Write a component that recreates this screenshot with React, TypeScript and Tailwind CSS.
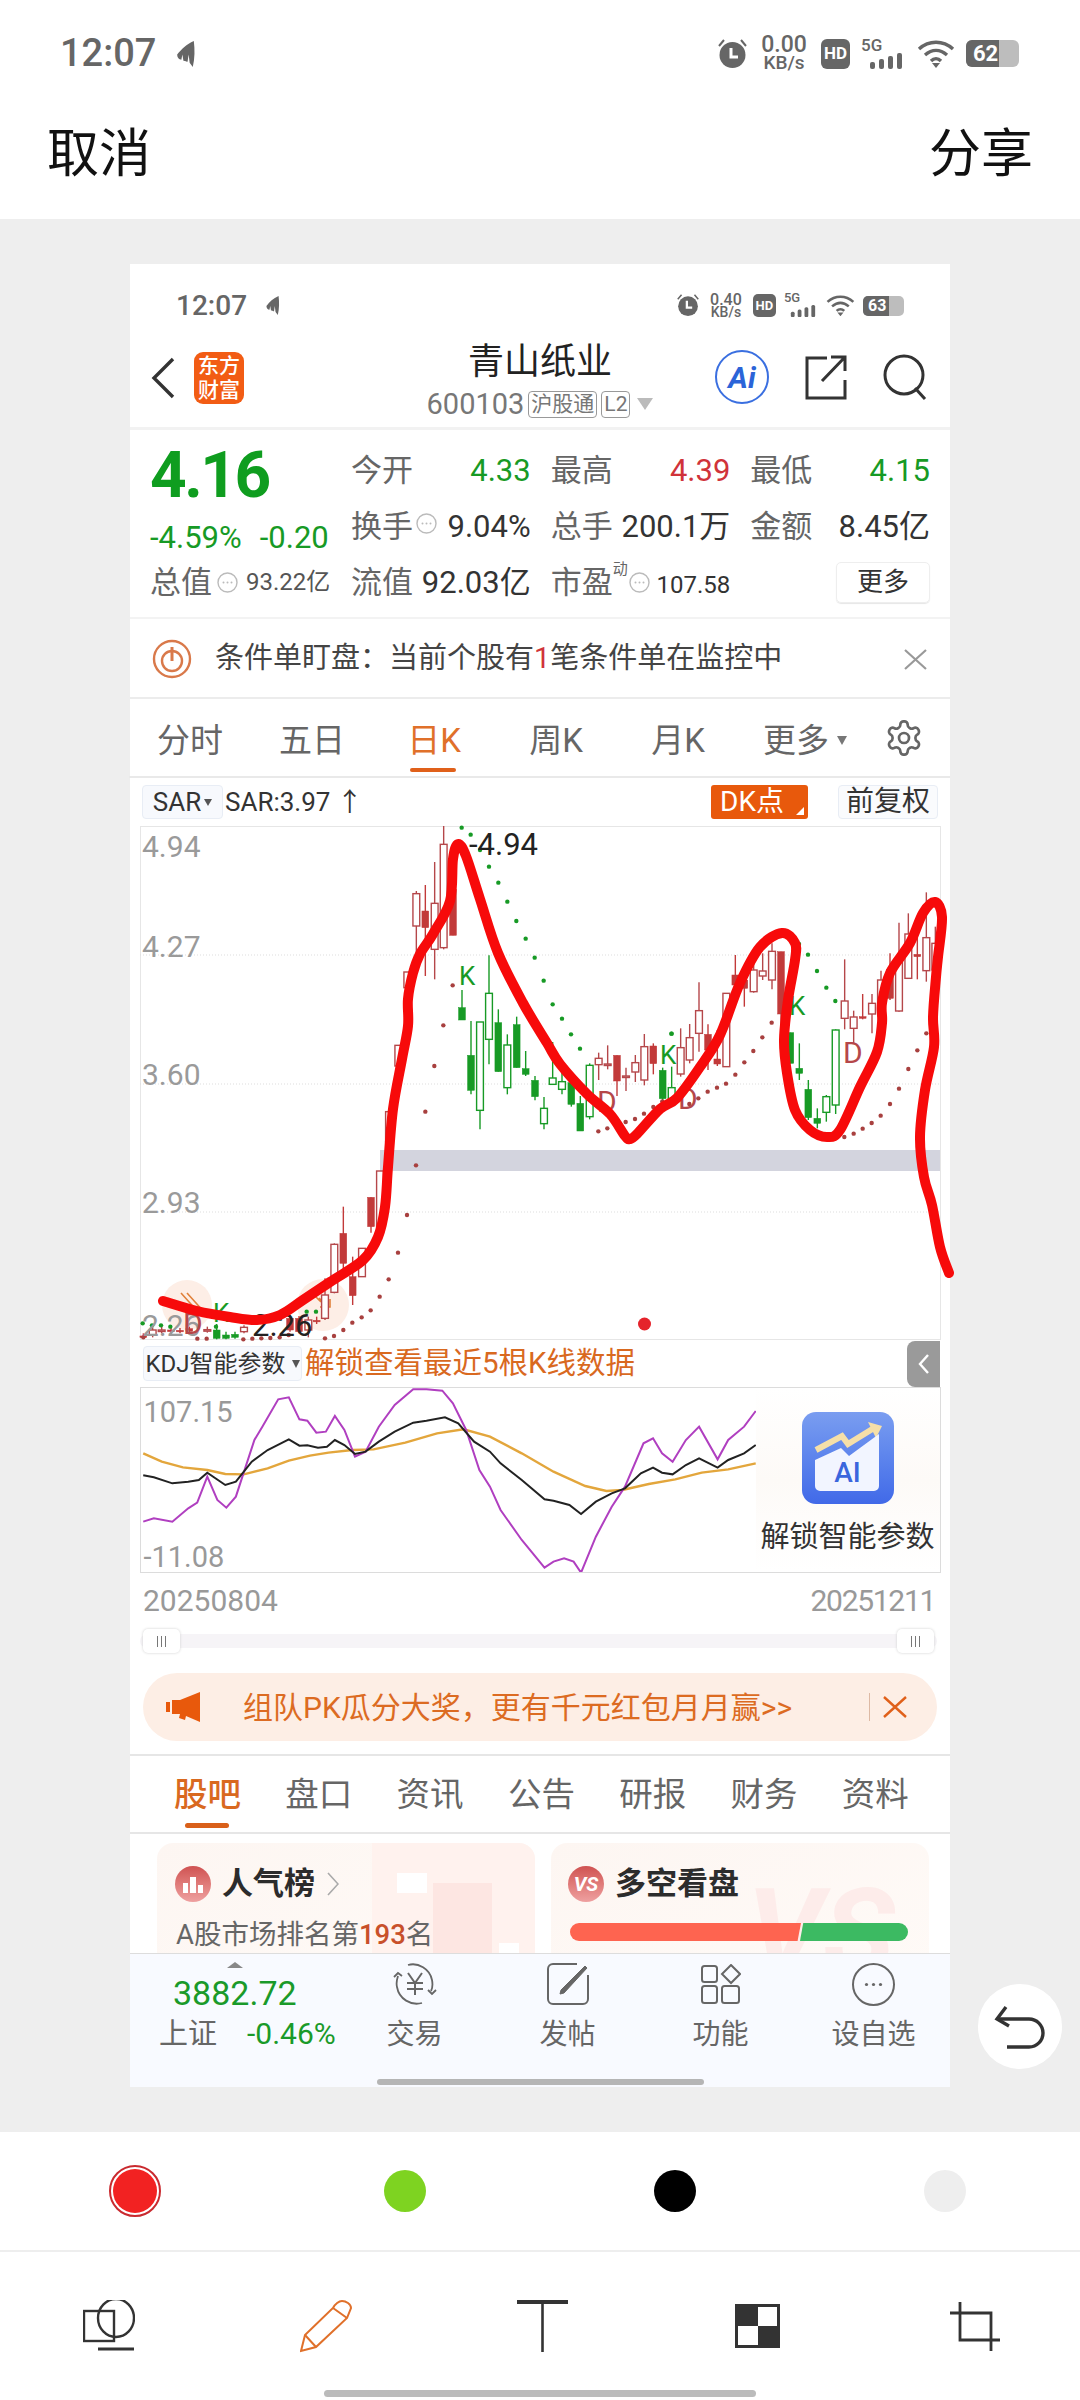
import { ReactNode } from 'react';

type Kind = 'R' | 'r' | 'G' | 'g';
type Candle = [number, number, number, number, number, Kind];

const RED = '#b5474a';
const RED_FILL = '#c23a3a';
const GREEN = '#179a25';

// candles read off the picture, x/y in page pixels after conversion
const fromA = (x: number, y: number) => [380 + x / 3, 826 + y / 3];
const fromB = (x: number, y: number) => [660 + x / 3, 860 + y / 3];
const fromC = (x: number, y: number) => [130 + x / 3, 1100 + y / 3];

const candlesC: Candle[] = [
  [40, 700, 708, 712, 716, 'r'], [68, 682, 690, 705, 712, 'R'], [95, 680, 690, 692, 700, 'R'], [123, 682, 690, 695, 702, 'r'],
  [150, 684, 691, 694, 700, 'r'], [178, 680, 686, 694, 700, 'r'], [232, 680, 689, 691, 698, 'R'], [260, 672, 690, 715, 718, 'g'],
  [288, 695, 705, 715, 718, 'g'], [315, 695, 703, 712, 716, 'g'], [342, 676, 682, 695, 700, 'R'], [480, 645, 655, 690, 695, 'r'],
  [507, 648, 655, 695, 700, 'r'], [535, 650, 660, 690, 712, 'R'], [560, 650, 661, 664, 672, 'r'], [585, 535, 585, 655, 660, 'R'],
  [613, 430, 433, 577, 580, 'R'], [640, 320, 400, 490, 520, 'r'], [668, 470, 530, 587, 615, 'r'], [696, 445, 445, 530, 530, 'R'],
  [723, 292, 292, 380, 398, 'r'], [750, 213, 213, 380, 380, 'R'], [777, 35, 35, 125, 125, 'R'],
];
const candlesA: Candle[] = [
  [55, 658, 658, 720, 730, 'R'], [82, 438, 438, 485, 485, 'R'], [109, 195, 203, 300, 430, 'R'], [136, 177, 255, 305, 450, 'r'],
  [164, 108, 232, 370, 460, 'R'], [191, 0, 55, 365, 370, 'R'], [219, 190, 190, 328, 328, 'r'], [246, 492, 545, 582, 582, 'g'],
  [273, 585, 688, 793, 805, 'g'], [300, 588, 588, 853, 910, 'G'], [327, 388, 502, 640, 715, 'G'], [355, 550, 590, 737, 737, 'g'],
  [382, 625, 657, 785, 805, 'G'], [410, 572, 596, 725, 725, 'g'], [437, 675, 728, 745, 750, 'g'], [465, 750, 763, 812, 823, 'g'],
  [492, 813, 847, 893, 910, 'G'], [518, 648, 756, 775, 775, 'G'], [546, 740, 767, 790, 805, 'G'], [574, 750, 770, 835, 842, 'g'],
  [601, 810, 832, 915, 915, 'g'], [629, 712, 718, 872, 880, 'G'], [656, 680, 697, 716, 762, 'R'], [683, 658, 714, 718, 730, 'R'],
  [711, 688, 688, 765, 810, 'r'], [738, 725, 750, 753, 795, 'R'], [766, 687, 710, 738, 768, 'R'], [793, 624, 662, 762, 778, 'R'],
  [820, 652, 660, 713, 745, 'r'], [848, 725, 733, 818, 830, 'g'],
];
const candlesB: Candle[] = [
  [35, 620, 683, 730, 735, 'G'], [62, 505, 563, 642, 650, 'R'], [89, 492, 533, 600, 610, 'R'], [117, 367, 452, 520, 575, 'R'],
  [144, 493, 523, 570, 630, 'r'], [172, 510, 597, 612, 618, 'r'], [199, 400, 400, 620, 620, 'R'], [226, 285, 345, 375, 375, 'r'],
  [253, 340, 360, 385, 440, 'r'], [281, 310, 330, 395, 398, 'R'], [308, 280, 333, 348, 360, 'R'], [336, 250, 274, 360, 388, 'R'],
  [363, 275, 275, 462, 505, 'r'], [391, 518, 518, 610, 610, 'g'], [418, 550, 625, 640, 660, 'g'], [445, 660, 688, 773, 780, 'g'],
  [472, 745, 775, 790, 805, 'g'], [499, 705, 710, 757, 785, 'G'], [527, 508, 510, 735, 762, 'G'], [554, 298, 423, 475, 508, 'R'],
  [581, 452, 471, 505, 550, 'R'], [608, 402, 470, 475, 478, 'r'], [636, 402, 430, 462, 520, 'R'], [663, 332, 360, 430, 470, 'R'],
  [690, 280, 328, 415, 420, 'r'], [717, 188, 300, 453, 455, 'R'], [745, 160, 222, 355, 355, 'R'], [772, 225, 283, 290, 358, 'r'],
  [799, 97, 233, 332, 365, 'R'], [826, 200, 250, 330, 360, 'R'],
];

const redDots = [
  ...[[40, 712], [202, 716], [230, 716], [340, 718], [367, 716], [394, 715], [421, 714], [449, 712], [476, 705], [585, 715], [612, 708], [640, 690], [667, 668], [695, 652], [722, 631], [749, 590], [776, 538], [804, 458], [831, 345]].map(([x, y]) => fromC(x, y)),
  ...[[108, 1018], [136, 857], [163, 720], [190, 598], [218, 478], [655, 916], [682, 907], [737, 888], [765, 879], [792, 863], [820, 843], [847, 826]].map(([x, y]) => fromA(x, y)),
  ...[[88, 732], [115, 715], [143, 695], [171, 683], [198, 671], [226, 644], [253, 607], [280, 573], [307, 532], [335, 488], [553, 831], [581, 821], [608, 806], [635, 789], [662, 767], [690, 732], [717, 686], [745, 627], [772, 571], [799, 520], [826, 462]].map(([x, y]) => fromB(x, y)),
];
const greenDots = [
  ...[[38, 670], [66, 676], [93, 676], [121, 680], [258, 680], [530, 635], [558, 635]].map(([x, y]) => fromC(x, y)),
  ...[[245, 5], [272, 26], [300, 72], [327, 122], [355, 170], [382, 227], [409, 285], [437, 338], [464, 395], [491, 464], [518, 535], [546, 578], [573, 625], [600, 668], [875, 623]].map(([x, y]) => fromA(x, y)),
  ...[[34, 521], [417, 252], [444, 284], [471, 333], [499, 383], [526, 423]].map(([x, y]) => fromB(x, y)),
];

// hand drawn red marker line
const marker = [
  [163, 1301], [197, 1311], [230, 1317], [257, 1320], [280, 1315], [303, 1300], [330, 1282], [363, 1260], [378, 1237], [385, 1207], [388, 1167],
  [393, 1109], [402, 1059], [408, 1026], [408, 999], [413, 973], [420, 954], [433, 934], [450, 901], [453, 859], [458, 844], [466, 856], [480, 899],
  [498, 953], [523, 1003], [547, 1043], [560, 1064], [587, 1094], [610, 1114], [625, 1136], [630, 1139], [637, 1134], [660, 1109], [677, 1098],
  [700, 1067], [720, 1035], [740, 983], [760, 947], [782, 933], [795, 943], [795, 960], [788, 1000], [784, 1040], [787, 1073], [795, 1110], [810, 1130],
  [827, 1137], [840, 1130], [860, 1087], [877, 1052], [882, 1023], [882, 1003], [890, 973], [910, 943], [923, 913], [935, 902], [942, 917], [938, 957],
  [936, 977], [933, 1017], [934, 1047], [925, 1090], [920, 1137], [924, 1177], [932, 1205], [940, 1247], [949, 1273],
];

function smooth(pts: number[][]) {
  let d = `M${pts[0][0]} ${pts[0][1]}`;
  for (let i = 0; i < pts.length - 1; i++) {
    const p0 = pts[Math.max(i - 1, 0)];
    const p1 = pts[i];
    const p2 = pts[i + 1];
    const p3 = pts[Math.min(i + 2, pts.length - 1)];
    const c1x = p1[0] + (p2[0] - p0[0]) / 6;
    const c1y = p1[1] + (p2[1] - p0[1]) / 6;
    const c2x = p2[0] - (p3[0] - p1[0]) / 6;
    const c2y = p2[1] - (p3[1] - p1[1]) / 6;
    d += ` C${c1x} ${c1y} ${c2x} ${c2y} ${p2[0]} ${p2[1]}`;
  }
  return d;
}

const purple = [[25, 575], [45, 565], [80, 575], [110, 535], [127, 518], [146, 440], [165, 510], [182, 533], [200, 500], [235, 330], [250, 290], [280, 208], [300, 202], [320, 268], [335, 272], [352, 308], [370, 305], [387, 258], [405, 300], [425, 380], [445, 365], [470, 290], [500, 225], [535, 178], [560, 178], [590, 182], [610, 220], [635, 300], [660, 420], [680, 470], [700, 540], [740, 630], [783, 713], [800, 695], [820, 685], [838, 695], [852, 728], [880, 620], [910, 530], [935, 470], [970, 340], [988, 325], [1005, 370], [1025, 395], [1050, 330], [1075, 290], [1110, 388], [1130, 330], [1160, 290], [1182, 243]];
const black = [[25, 436], [45, 442], [80, 460], [110, 455], [130, 450], [146, 428], [180, 465], [200, 455], [230, 395], [260, 360], [300, 328], [320, 347], [335, 346], [355, 353], [372, 350], [387, 330], [405, 345], [425, 372], [445, 365], [470, 335], [500, 305], [535, 278], [560, 272], [595, 262], [620, 280], [650, 335], [680, 365], [700, 400], [740, 450], [783, 508], [800, 512], [830, 525], [852, 552], [880, 515], [910, 490], [935, 475], [965, 430], [988, 413], [1005, 428], [1025, 433], [1050, 405], [1075, 385], [1110, 413], [1130, 390], [1160, 370], [1182, 345]];
const orange = [[25, 370], [60, 395], [100, 412], [146, 420], [180, 432], [215, 433], [260, 415], [300, 392], [340, 377], [375, 368], [420, 360], [460, 358], [520, 338], [580, 310], [630, 298], [680, 320], [740, 370], [800, 425], [860, 468], [900, 483], [930, 480], [980, 462], [1030, 448], [1080, 428], [1130, 418], [1182, 400]];
const kdj = (pts: number[][]) => pts.map(([x, y]) => `${130 + x / 1.889},${1330 + y / 3}`).join(' ');

function CandleMark({ c, map }: { c: Candle; map: (x: number, y: number) => number[] }) {
  const [zx, hi, top, bot, lo, kind] = c;
  const [x, yHi] = map(zx, hi);
  const yTop = map(zx, top)[1];
  const yBot = map(zx, bot)[1];
  const yLo = map(zx, lo)[1];
  const isRed = kind === 'R' || kind === 'r';
  const filled = kind === 'r' || kind === 'g';
  const color = isRed ? (filled ? RED_FILL : RED) : GREEN;
  return (
    <g>
      <line x1={x} x2={x} y1={yHi} y2={yLo} stroke={color} strokeWidth={1.4} />
      <rect x={x - 3.4} y={yTop} width={6.8} height={Math.max(yBot - yTop, 1.5)} fill={filled ? color : '#fff'} stroke={color} strokeWidth={filled ? 0.5 : 1.4} />
    </g>
  );
}

function PriceChart() {
  return (
    <div className="relative h-[514px] mx-[9.5px] w-[801px] border border-[#e6e6e6]">
      <svg className="absolute left-[-10.5px] top-[-1px] overflow-visible" width={820} height={514} viewBox="130 826 820 514">
        <circle cx={187} cy={1305} r={25} fill="#fdeee6" />
        <circle cx={323} cy={1305} r={26} fill="#fdeee6" />
        {[955, 1084, 1212].map(y => (
          <line key={y} x1={140} x2={940} y1={y} y2={y} stroke="#dddddd" strokeWidth={1} strokeDasharray="1 2" />
        ))}
        <rect x={380} y={1150} width={560} height={21} fill="#d3d4de" />
        <path d="M181 1293l18 20M187 1293l18 20" stroke="#e0803a" strokeWidth={1.6} fill="none" />
        <path d="M311 1292l10 10M320 1307h10v-8M328 1307l-9-9" stroke="#e0803a" strokeWidth={1.6} fill="none" />
        {candlesC.map((c, i) => <CandleMark key={i} c={c} map={fromC} />)}
        {candlesA.map((c, i) => <CandleMark key={i} c={c} map={fromA} />)}
        {candlesB.map((c, i) => <CandleMark key={i} c={c} map={fromB} />)}
        {redDots.map(([x, y], i) => <circle key={i} cx={x} cy={y} r={2.2} fill="#a8403f" />)}
        {greenDots.map(([x, y], i) => <circle key={i} cx={x} cy={y} r={2.2} fill={GREEN} />)}
        <g fontFamily="Roboto, sans-serif" fontSize={30} fill="#9a9a9a">
          <text x={142} y={857}>4.94</text>
          <text x={142} y={957}>4.27</text>
          <text x={142} y={1085}>3.60</text>
          <text x={142} y={1213}>2.93</text>
          <text x={142} y={1336}>2.26</text>
        </g>
        <g fontFamily="Roboto, sans-serif" fontSize={26} fill={GREEN}>
          <text x={459} y={985}>K</text>
          <text x={660} y={1064}>K</text>
          <text x={789} y={1015}>K</text>
          <text x={213} y={1322}>K</text>
        </g>
        <g fontFamily="Roboto, sans-serif" fontSize={30} fill="#b5474a">
          <text x={597} y={1112}>D</text>
          <text x={678} y={1109}>D</text>
          <text x={843} y={1063}>D</text>
          <text x={183} y={1334}>D</text>
        </g>
        <g fontFamily="Roboto, sans-serif" fontSize={31} fill="#222222">
          <text x={469} y={855}>-4.94</text>
          <text x={252} y={1336}>2.26</text>
        </g>
        <circle cx={644.5} cy={1324} r={6.5} fill="#e5232b" />
        <path d={smooth(marker)} fill="none" stroke="#f70a0a" strokeWidth={10} strokeLinecap="round" strokeLinejoin="round" />
      </svg>
    </div>
  );
}

function KdjChart() {
  return (
    <div className="relative h-[186px] mx-[9.5px] w-[801px] border border-[#dcdcdc] bg-white overflow-hidden">
      <svg className="absolute left-[-10.5px] top-[-1px]" width={820} height={186} viewBox="130 1387 820 186">
        <polyline points={kdj(orange)} fill="none" stroke="#e3a63c" strokeWidth={2.4} />
        <polyline points={kdj(purple)} fill="none" stroke="#b03fc0" strokeWidth={2} />
        <polyline points={kdj(black)} fill="none" stroke="#222" strokeWidth={2} />
      </svg>
      <div className="absolute left-[3px] top-[2px] text-[29px] leading-[44px] text-[#999]">107.15</div>
      <div className="absolute left-[3px] bottom-0 text-[29px] leading-[30px] text-[#999]">-11.08</div>
      <div className="absolute right-0 top-0 bottom-0 w-[184px] bg-gradient-to-b from-white via-[#fdfaf7] to-white flex flex-col items-center">
        <div className="mt-[24px] w-[92px] h-[92px] rounded-[14px] bg-gradient-to-b from-[#7a9df0] to-[#4169e8] flex items-center justify-center relative overflow-hidden">
          <svg className="absolute left-0 top-0" width={92} height={92} viewBox="0 0 92 92">
            <path d="M14 38L40 24l6 8 26-16" fill="none" stroke="#f5dfa8" strokeWidth={6} />
            <path d="M66 10l14 4-6 12z" fill="#f5dfa8" />
            <path d="M13 48l26-12 8 8 30-22v52a5 5 0 0 1-5 5H18a5 5 0 0 1-5-5z" fill="#f2f5ff" />
          </svg>
          <span className="relative mt-[30px] text-[28px] font-medium text-[#3a66dd]">AI</span>
        </div>
        <div className="mt-[13px] text-[29px] leading-[40px] whitespace-nowrap text-[#333]">解锁智能参数</div>
      </div>
    </div>
  );
}

function Feather({ w, h }: { w: number; h: number }) {
  return (
    <svg width={w} height={h} viewBox="0 0 22 25" fill="#666">
      <path d="M19 0C12 3 7 8 3 13c0 3 2 5 4 5l1-5 1 6c2 0 3 1 4 1l1-7 1 8 3 4c2-8 2-17 1-25z" />
    </svg>
  );
}

function StatusIcons({ small, speed, battery }: { small?: boolean; speed: string; battery: string }) {
  const k = small ? 0.76 : 1;
  return (
    <div className={small ? 'flex items-center gap-[8px] text-[#666]' : 'flex items-center gap-[11px] text-[#666]'}>
      <svg width={29 * k} height={30 * k} viewBox="0 0 29 30" fill="#666">
        <circle cx={14.5} cy={16} r={13} />
        <path d="M1 7l5-6M28 7l-5-6" stroke="#666" strokeWidth={2} />
        <path d="M13 9v9h7" fill="none" stroke="#fff" strokeWidth={3} />
      </svg>
      <div className={small ? 'w-[38px] flex flex-col items-center text-[16px] leading-[13px] font-medium' : 'w-[52px] flex flex-col items-center text-[23px] leading-[18px] font-medium'}>
        <span>{speed}</span>
        <span className={small ? 'text-[14px]' : 'text-[19px]'}>KB/s</span>
      </div>
      <div className={small ? 'w-[23px] h-[23px] rounded-[5px] bg-[#666] text-white text-[13px] font-bold flex items-center justify-center' : 'w-[29px] h-[30px] rounded-[6px] bg-[#666] text-white text-[17px] font-bold flex items-center justify-center'}>HD</div>
      <div className="relative" style={{ width: 45 * k, height: 30 * k }}>
        <span className={small ? 'absolute left-0 top-[-3px] text-[13px] leading-[14px] font-medium' : 'absolute left-0 top-[-3px] text-[17px] leading-[18px] font-medium'}>5G</span>
        <svg className="absolute left-0 bottom-0" width={45 * k} height={16 * k} viewBox="0 0 45 16" fill="#666">
          <rect x={9} y={9} width={5} height={7} rx={2} />
          <rect x={18} y={6} width={5} height={10} rx={2} />
          <rect x={27} y={3} width={5} height={13} rx={2} />
          <rect x={36} y={0} width={5} height={16} rx={2} />
        </svg>
      </div>
      <svg width={38 * k} height={28 * k} viewBox="0 0 38 28" fill="none" stroke="#666" strokeWidth={3.4}>
        <path d="M2 9c10-9 24-9 34 0M8 15c7-6 15-6 22 0M14 21c3-3 7-3 10 0" />
        <path d="M19 28l-4-5h8z" fill="#666" stroke="none" />
      </svg>
      <div className={small ? 'relative w-[41px] h-[20px] rounded-[5px] bg-[#bdbdbd] overflow-hidden' : 'relative w-[53px] h-[27px] rounded-[6px] bg-[#bdbdbd] overflow-hidden'}>
        <div className={small ? 'h-full w-[26px] bg-[#666]' : 'h-full w-[33px] bg-[#666]'} />
        <span className={small ? 'absolute left-[5px] top-0 text-[16px] leading-[20px] font-bold text-white' : 'absolute left-[7px] top-0 text-[22px] leading-[27px] font-bold text-white'}>{battery}</span>
      </div>
    </div>
  );
}

function More() {
  return (
    <svg width={21} height={21} viewBox="0 0 21 21" fill="none">
      <circle cx={10.5} cy={10.5} r={9.5} stroke="#bbbbbb" strokeWidth={1.4} />
      <circle cx={6.5} cy={10.5} r={1} fill="#bbbbbb" />
      <circle cx={10.5} cy={10.5} r={1} fill="#bbbbbb" />
      <circle cx={14.5} cy={10.5} r={1} fill="#bbbbbb" />
    </svg>
  );
}

function Stat({ label, value, tone }: { label: ReactNode; value: ReactNode; tone?: string }) {
  return (
    <div className="h-[56px] flex items-center justify-between">
      <span className="flex items-center text-[#666]">{label}</span>
      <span className={tone ?? 'text-[#333]'}>{value}</span>
    </div>
  );
}

function Header() {
  return (
    <div className="grid grid-cols-[1fr_auto_1fr] h-[95px] border-b-[3px] border-[#f2f2f2]">
      <div className="flex items-center pl-[20px] pb-[6px]">
        <svg width={26} height={42} viewBox="0 0 26 42" fill="none" stroke="#333" strokeWidth={3.4}>
          <path d="M23 2L4 21l19 19" />
        </svg>
        <div className="ml-[18px] w-[50px] h-[52px] rounded-[9px] bg-[#f25c14] text-white text-[21px] leading-[24px] font-medium flex flex-col items-center justify-center">
          <span>东方</span>
          <span>财富</span>
        </div>
      </div>
      <div className="flex flex-col items-center pt-[5px]">
        <div className="text-[36px] leading-[44px] text-[#222]">青山纸业</div>
        <div className="mt-[2px] flex items-center text-[29px] leading-[36px] text-[#777]">
          <span>600103</span>
          <span className="ml-[4px] h-[27px] px-[2px] flex items-center rounded-[4px] border border-[#999] text-[21px]">沪股通</span>
          <span className="ml-[4px] h-[27px] px-[2px] flex items-center rounded-[4px] border border-[#999] text-[21px]">L2</span>
          <span className="ml-[7px] w-0 h-0 border-x-[8px] border-x-transparent border-t-[12px] border-t-[#bbb]" />
        </div>
      </div>
      <div className="flex items-center justify-end pr-[22px] pb-[8px] gap-[33px]">
        <div className="w-[54px] h-[54px] mr-[1px] rounded-full border-[2px] border-[#3a6fe0] flex items-center justify-center text-[30px] font-bold italic text-[#2b64d8]">Ai</div>
        <svg width={46} height={46} viewBox="0 0 46 46" fill="none" stroke="#333" strokeWidth={3}>
          <path d="M24 4H4v40h38V26" />
          <path d="M19 27L42 3M28 3h14v14" />
        </svg>
        <svg width={46} height={46} viewBox="0 0 46 46" fill="none" stroke="#333" strokeWidth={3}>
          <circle cx={22} cy={21} r={19} />
          <path d="M33 34l10 11" />
        </svg>
      </div>
    </div>
  );
}

function Quote() {
  return (
    <div className="flex h-[189px] pl-[20px] pr-[20px] pt-[12px] border-b-2 border-[#f3f3f3] text-[31px] leading-none">
      <div className="w-[201px] shrink-0">
        <div className="h-[68px] flex items-center text-[64px] tracking-[-2.5px] font-bold text-[#0f9d1f]">4.16</div>
        <div className="h-[54px] flex items-center gap-[18px] text-[31px] text-[#179a25]">
          <span>-4.59%</span>
          <span>-0.20</span>
        </div>
        <div className="h-[36px] flex items-center">
          <span className="text-[#666]">总值</span>
          <span className="ml-[5px]"><More /></span>
          <span className="ml-[8px] text-[24px] text-[#555]">93.22亿</span>
        </div>
      </div>
      <div className="flex-1 grid grid-cols-3 gap-x-[20px] content-start">
        <Stat label="今开" value="4.33" tone="text-[#179a25]" />
        <Stat label="最高" value="4.39" tone="text-[#d0333a]" />
        <Stat label="最低" value="4.15" tone="text-[#179a25]" />
        <Stat label={<>换手<span className="ml-[3px] -mt-[6px]"><More /></span></>} value="9.04%" />
        <Stat label="总手" value="200.1万" />
        <Stat label="金额" value="8.45亿" />
        <Stat label="流值" value="92.03亿" />
        <Stat
          label={<>市盈<span className="-mt-[26px] text-[15px]">动</span><span className="ml-[1px]"><More /></span></>}
          value={<span className="text-[24px]">107.58</span>}
        />
        <div className="h-[56px] flex items-center justify-end">
          <div className="w-[94px] h-[41px] rounded-[5px] border border-[#eeeeee] shadow-[0_1px_1px_#e6e6e6] flex items-center justify-center text-[26px] text-[#333]">更多</div>
        </div>
      </div>
    </div>
  );
}

function ConditionBar() {
  return (
    <div className="flex items-center h-[80px] pl-[22px] pr-[23px] pt-[2px] border-b-2 border-[#ececec] text-[29px] text-[#444]">
      <svg width={40} height={40} viewBox="0 0 40 40" fill="none" stroke="#d9794a" strokeWidth={2.4}>
        <circle cx={20} cy={20} r={18} />
        <circle cx={20} cy={22} r={10} />
        <path d="M20 8v14" strokeWidth={3} />
      </svg>
      <span className="ml-[23px] whitespace-nowrap">条件单盯盘{'\uFF1A'}当前个股有<span className="text-[#d0333a]">1</span>笔条件单在监控中</span>
      <svg className="ml-auto" width={23} height={21} viewBox="0 0 23 21" fill="none" stroke="#999" strokeWidth={2.2}>
        <path d="M1 1l21 19M22 1L1 20" />
      </svg>
    </div>
  );
}

function PeriodTabs() {
  const tabs = ['分时', '五日', '日K', '周K', '月K'];
  return (
    <div className="flex items-center h-[79px] -ml-[1px] pt-[6px] border-b-2 border-[#e9e9e9] text-[33px] text-[#666]">
      {tabs.map(t => (
        <div key={t} className={t === '日K' ? 'relative w-[122px] h-full flex items-center justify-center text-[#e0702a]' : 'w-[122px] h-full flex items-center justify-center'}>
          {t}
          {t === '日K' && <span className="absolute bottom-[4px] left-[37px] w-[46px] h-[4px] rounded-full bg-[#e0601a]" />}
        </div>
      ))}
      <div className="ml-[24px] flex items-center">
        更多
        <span className="ml-[8px] w-0 h-0 border-x-[5px] border-x-transparent border-t-[9px] border-t-[#777]" />
      </div>
      <svg className="ml-[37px] -mt-[6px]" width={40} height={40} viewBox="0 0 24 24" fill="none" stroke="#666" strokeWidth={1.6}>
        <path d="M12.22 2h-.44a2 2 0 0 0-2 2v.18a2 2 0 0 1-1 1.73l-.43.25a2 2 0 0 1-2 0l-.15-.08a2 2 0 0 0-2.73.73l-.22.38a2 2 0 0 0 .73 2.73l.15.1a2 2 0 0 1 1 1.72v.51a2 2 0 0 1-1 1.74l-.15.09a2 2 0 0 0-.73 2.73l.22.38a2 2 0 0 0 2.73.73l.15-.08a2 2 0 0 1 2 0l.43.25a2 2 0 0 1 1 1.73V20a2 2 0 0 0 2 2h.44a2 2 0 0 0 2-2v-.18a2 2 0 0 1 1-1.73l.43-.25a2 2 0 0 1 2 0l.15.08a2 2 0 0 0 2.73-.73l.22-.39a2 2 0 0 0-.73-2.73l-.15-.08a2 2 0 0 1-1-1.74v-.5a2 2 0 0 1 1-1.74l.15-.09a2 2 0 0 0 .73-2.73l-.22-.38a2 2 0 0 0-2.73-.73l-.15.08a2 2 0 0 1-2 0l-.43-.25a2 2 0 0 1-1-1.73V4a2 2 0 0 0-2-2z" />
        <circle cx={12} cy={12} r={3} />
      </svg>
    </div>
  );
}

function Banner() {
  return (
    <div className="shrink-0 mx-[13px] mt-[25px] h-[68px] rounded-[34px] bg-[#fdeee5] flex items-center pl-[23px] text-[30px] text-[#dc6b22] relative">
      <svg width={36} height={30} viewBox="0 0 36 30" fill="#e8590c">
        <rect x={0} y={10} width={4} height={10} />
        <path d="M6 8h8L34 0v30L20 24l-1 4-6-2 1-4H6z" />
      </svg>
      <span className="ml-[41px] whitespace-nowrap">组队PK瓜分大奖{'\uFF0C'}更有千元红包月月赢&gt;&gt;</span>
      <span className="absolute left-[726px] top-[20px] w-[1px] h-[28px] bg-[#ddb9a4]" />
      <svg className="absolute left-[740px] top-[23px]" width={24} height={22} viewBox="0 0 24 22" fill="none" stroke="#e0601a" strokeWidth={2.4}>
        <path d="M1 1l22 20M23 1L1 21" />
      </svg>
    </div>
  );
}

function NewsTabs() {
  const tabs = ['股吧', '盘口', '资讯', '公告', '研报', '财务', '资料'];
  return (
    <div className="shrink-0 mt-[13px] h-[80px] flex pl-[24px] pt-[3px] border-y-2 border-[#e6e6e6] text-[33.5px] text-[#666]">
      {tabs.map((t, i) => (
        <div key={t} className={i === 0 ? 'relative w-[111.3px] flex items-center pl-[20px] text-[#d9691f] font-medium' : 'w-[111.3px] flex items-center pl-[20px]'}>
          {t}
          {i === 0 && <span className="absolute bottom-[4px] left-[31px] w-[44px] h-[5px] rounded-full bg-[#d9601a]" />}
        </div>
      ))}
    </div>
  );
}

function Cards() {
  return (
    <div className="flex-1 overflow-hidden flex gap-[16px] pl-[27px] pr-[21px] pt-[9px]">
      <div className="relative w-[378px] h-[200px] rounded-[16px] bg-gradient-to-br from-[#fdf6f2] to-[#fffbf8] overflow-hidden">
        <svg className="absolute left-0 top-0" width={378} height={200} viewBox="0 0 378 200">
          <path d="M215 0h163v110H215z" fill="#fff2ee" />
          <path d="M276 40h59v160h-59z" fill="#fde6e2" />
          <path d="M240 30h30v20h-30zM342 100h20v60h-20z" fill="#fff" />
        </svg>
        <div className="relative mt-[23px] ml-[18px] flex items-center">
          <div className="w-[36px] h-[36px] rounded-full bg-gradient-to-b from-[#cf5252] to-[#eea0a0] flex items-end justify-center gap-[2px] pb-[9px]">
            <span className="w-[5px] h-[10px] bg-white" />
            <span className="w-[6px] h-[16px] bg-white" />
            <span className="w-[5px] h-[8px] bg-white" />
          </div>
          <span className="ml-[11px] text-[31px] leading-[36px] font-bold text-[#2c2c2c]">人气榜</span>
          <svg className="ml-[12px]" width={12} height={24} viewBox="0 0 12 24" fill="none" stroke="#aaa" strokeWidth={1.6}>
            <path d="M1 1l10 11L1 23" />
          </svg>
        </div>
        <div className="relative mt-[15px] ml-[19px] text-[27.5px] leading-[36px] text-[#666] whitespace-nowrap">
          A股市场排名第<span className="text-[#c8502a] font-medium">193</span>名
        </div>
      </div>
      <div className="relative w-[378px] h-[200px] rounded-[16px] bg-gradient-to-br from-[#fdf6f2] to-[#fffbf8] overflow-hidden">
        <span className="absolute left-[196px] top-[0px] text-[120px] leading-[180px] font-bold italic text-[#fdecea]">VS</span>
        <div className="relative mt-[23px] ml-[17px] flex items-center">
          <div className="w-[36px] h-[36px] rounded-full bg-gradient-to-b from-[#cf5252] to-[#eea0a0] flex items-center justify-center text-[20px] font-bold italic text-white">VS</div>
          <span className="ml-[11px] text-[31px] leading-[36px] font-bold text-[#2c2c2c]">多空看盘</span>
        </div>
        <div className="relative mt-[21px] ml-[19px] w-[338px] h-[18px] flex">
          <div className="w-[231px] rounded-l-full bg-[#fe6450] [clip-path:polygon(0_0,100%_0,98.5%_100%,0_100%)]" />
          <div className="flex-1 -ml-[1px] rounded-r-full bg-[#3cba62] [clip-path:polygon(3%_0,100%_0,100%_100%,0_100%)]" />
        </div>
      </div>
    </div>
  );
}

function NavItem({ label, icon }: { label: string; icon: ReactNode }) {
  return (
    <div className="w-[153px] flex flex-col items-center pt-[8px]">
      <div className="h-[44px] flex items-center">{icon}</div>
      <div className="mt-[9px] text-[28px] leading-[40px] text-[#666] whitespace-nowrap">{label}</div>
    </div>
  );
}

function BottomNav() {
  return (
    <div className="relative shrink-0 h-[134px] border-t border-[#dddddd] bg-[#f8faff] flex">
      <div className="w-[210px] shrink-0 pl-[29px] relative">
        <span className="absolute left-[97px] top-[8px] w-0 h-0 border-x-[8px] border-x-transparent border-b-[6px] border-b-[#888]" />
        <div className="ml-[14px] mt-[20px] text-[34px] leading-[38px] text-[#1a9a2a]">3882.72</div>
        <div className="flex items-center mt-[2px]">
          <span className="text-[29px] leading-[40px] text-[#666]">上证</span>
          <span className="ml-[30px] text-[30px] leading-[40px] text-[#1a9a2a]">-0.46%</span>
        </div>
      </div>
      <div className="flex -ml-[2px]">
        <NavItem
          label="交易"
          icon={
            <svg width={46} height={44} viewBox="0 0 46 44" fill="none" stroke="#666" strokeWidth={1.8}>
              <path d="M16 3c10-3 22 4 24 15 1 5 0 9-1 11M30 41c-11 3-23-4-25-16-1-4 0-8 1-11" />
              <path d="M2 15l4-4 4 3M36 28l4 4 4-4" />
              <path d="M16 11l7 10 7-10M23 21v12M15 21h16M15 27h16" strokeWidth={2} />
            </svg>
          }
        />
        <NavItem
          label="发帖"
          icon={
            <svg width={42} height={42} viewBox="0 0 42 42" fill="none" stroke="#666" strokeWidth={2}>
              <path d="M30 1H6a5 5 0 0 0-5 5v30a5 5 0 0 0 5 5h30a5 5 0 0 0 5-5V12" />
              <path d="M14 27L38 3l2 2-23 25-4 1z" fill="#666" strokeWidth={1} />
            </svg>
          }
        />
        <NavItem
          label="功能"
          icon={
            <svg width={40} height={40} viewBox="0 0 40 40" fill="none" stroke="#666" strokeWidth={2}>
              <rect x={1} y={2} width={15} height={16} rx={2.5} />
              <path d="M30 1l9 9-9 9-9-9z" />
              <rect x={1} y={22} width={15} height={17} rx={2.5} />
              <rect x={21} y={22} width={17} height={17} rx={2.5} />
            </svg>
          }
        />
        <NavItem
          label="设自选"
          icon={
            <svg width={43} height={43} viewBox="0 0 43 43" fill="none" stroke="#666" strokeWidth={2}>
              <circle cx={21.5} cy={21.5} r={20.5} />
              <circle cx={14.5} cy={21.5} r={1.6} fill="#666" stroke="none" />
              <circle cx={21.5} cy={21.5} r={1.6} fill="#666" stroke="none" />
              <circle cx={28.5} cy={21.5} r={1.6} fill="#666" stroke="none" />
            </svg>
          }
        />
      </div>
      <span className="absolute left-[247px] bottom-[2px] w-[327px] h-[6px] rounded-full bg-[#b5b5b5]" />
    </div>
  );
}

function Card() {
  return (
    <div className="relative w-[820px] h-[1823px] ml-[130px] bg-white flex flex-col">
      <div className="shrink-0 h-[71px] pt-[12px] pl-[46px] pr-[46px] flex items-center justify-between">
        <div className="flex items-center gap-[16px]">
          <span className="text-[28px] font-medium text-[#666]">12:07</span>
          <Feather w={19} h={19} />
        </div>
        <StatusIcons small speed="0.40" battery="63" />
      </div>
      <Header />
      <Quote />
      <ConditionBar />
      <PeriodTabs />
      <div className="h-[48px] flex items-center pl-[12px] pr-[12px] text-[26px] text-[#333]">
        <div className="h-[34px] w-[81px] rounded-[4px] border border-[#e8edf5] bg-[#f7f9fd] flex items-center justify-center">
          SAR<span className="ml-[3px] w-0 h-0 border-x-[4px] border-x-transparent border-t-[7px] border-t-[#555]" />
        </div>
        <span className="ml-[2px]">SAR:3.97 ↑</span>
        <div className="ml-auto relative w-[97px] h-[34px] rounded-[3px] bg-[#e8590c] text-[28px] text-white flex items-center pl-[9px]">
          DK点
          <span className="absolute right-[4px] bottom-[4px] w-0 h-0 border-l-[8px] border-l-transparent border-b-[8px] border-b-white" />
        </div>
        <div className="ml-[30px] w-[100px] h-[34px] rounded-[4px] border border-[#e8edf5] bg-[#fafbfd] text-[28px] flex items-center justify-center">前复权</div>
      </div>
      <PriceChart />
      <div className="relative h-[47px] flex items-center pl-[13px]">
        <div className="h-[35px] w-[159px] rounded-[4px] border border-[#e8edf5] bg-[#f7f9fd] flex items-center justify-center text-[24px] text-[#333]">
          KDJ智能参数
          <span className="ml-[6px] w-0 h-0 border-x-[4px] border-x-transparent border-t-[8px] border-t-[#555]" />
        </div>
        <span className="ml-[3px] text-[29.5px] text-[#d9691f]">解锁查看最近5根K线数据</span>
        <div className="absolute left-[777px] top-[1px] w-[33px] h-[46px] rounded-l-[8px] bg-[#9a9a9a] flex items-center justify-center">
          <svg width={12} height={22} viewBox="0 0 12 22" fill="none" stroke="#fff" strokeWidth={2.4}>
            <path d="M10 2L2 11l8 9" />
          </svg>
        </div>
      </div>
      <KdjChart />
      <div className="mt-[7px] h-[40px] pl-[13px] pr-[15px] flex items-center justify-between text-[30px] text-[#999]">
        <span>20250804</span>
        <span className="tracking-[-1.3px]">20251211</span>
      </div>
      <div className="relative shrink-0 mt-[14px] mx-[10px] h-[14px] w-[797px] rounded-full bg-[#f6f4f7]">
        {['left-[3px]', 'left-[757px]'].map(pos => (
          <div key={pos} className={`absolute ${pos} -top-[5px] w-[37px] h-[24px] rounded-[5px] bg-white shadow-[0_0_3px_#d0d0d0] flex items-center justify-center gap-[3px]`}>
            <span className="w-[1px] h-[11px] bg-[#777]" />
            <span className="w-[1px] h-[11px] bg-[#777]" />
            <span className="w-[1px] h-[11px] bg-[#777]" />
          </div>
        ))}
      </div>
      <Banner />
      <NewsTabs />
      <Cards />
      <BottomNav />
    </div>
  );
}

export default function App() {
  return (
    <div className="w-[1080px] h-[2400px] overflow-hidden relative bg-white flex flex-col [font-family:Roboto,'Noto_Sans_CJK_SC',sans-serif]">
      {/* top bar of the editor */}
      <div className="shrink-0 h-[219px]">
        <div className="h-[104px] pt-[3px] flex items-center justify-between pl-[60px] pr-[61px]">
          <div className="flex items-center gap-[18px]">
            <span className="text-[38px] font-medium text-[#666]">12:07</span>
            <Feather w={23} h={26} />
          </div>
          <StatusIcons speed="0.00" battery="62" />
        </div>
        <div className="h-[96px] pt-[5px] flex items-center justify-between pl-[47px] pr-[47px] text-[52px] text-[#111]">
          <span>取消</span>
          <span>分享</span>
        </div>
      </div>

      {/* screenshot being edited */}
      <div className="shrink-0 h-[1913px] pt-[45px] bg-[#eeeeee]">
        <Card />
      </div>

      {/* undo button sits over the grey area */}
      <div className="absolute left-[978px] top-[1984px] w-[84px] h-[85px] rounded-full bg-white flex items-center justify-center">
        <svg width={52} height={44} viewBox="0 0 52 44" fill="none" stroke="#333" strokeWidth={3.4}>
          <path d="M12 2L3 14l12 7" />
          <path d="M4 14h31a14 14 0 0 1 14 14v0a14 14 0 0 1-14 14H13" />
        </svg>
      </div>

      {/* pen colours */}
      <div className="shrink-0 h-[120px] border-b-2 border-[#eeeeee] flex items-center">
        <div className="w-[270px] flex justify-center">
          <div className="w-[52px] h-[52px] rounded-full border-2 border-[#c92a2f] p-[2px]">
            <div className="w-full h-full rounded-full bg-[#f22222]" />
          </div>
        </div>
        <div className="w-[270px] flex justify-center"><div className="w-[42px] h-[42px] rounded-full bg-[#7ed321]" /></div>
        <div className="w-[270px] flex justify-center"><div className="w-[42px] h-[42px] rounded-full bg-black" /></div>
        <div className="w-[270px] flex justify-center"><div className="w-[42px] h-[42px] rounded-full bg-[#eeeeee]" /></div>
      </div>

      {/* tools */}
      <div className="relative flex-1 flex items-start pt-[48px] pl-[83px]">
        <svg width={52} height={52} viewBox="83 2300 52 52" fill="none" stroke="#333" strokeWidth={2.4}>
          <rect x={84} y={2311} width={30} height={30} />
          <ellipse cx={116} cy={2318} rx={18} ry={19} />
          <path d="M98 2349h36" strokeWidth={3} />
        </svg>
        <svg className="ml-[165px]" width={52} height={54} viewBox="299 2300 52 54" fill="none" stroke="#e0702a" strokeWidth={2}>
          <path d="M300 2351l4-16 28-27c2-4 6-7 9-7 4 0 9 3 9 7l-4 10-31 29z" />
          <path d="M304 2335l11 12M332 2308l14 10" />
        </svg>
        <svg className="ml-[165px]" width={52} height={52} viewBox="517 2300 52 52" fill="none" stroke="#333">
          <path d="M517 2302h51" strokeWidth={4} />
          <path d="M542.5 2302v50" strokeWidth={2.6} />
        </svg>
        <div className="ml-[166px] mt-[4px] w-[45px] h-[44px] bg-[#333] grid grid-cols-2 grid-rows-2 p-[3px]">
          <span />
          <span className="bg-white" />
          <span className="bg-white" />
          <span />
        </div>
        <svg className="ml-[169px]" width={52} height={52} viewBox="948 2300 52 52" fill="none" stroke="#333" strokeWidth={2.8}>
          <path d="M959 2302v38h40" />
          <path d="M949 2313h41v38" />
        </svg>
        <span className="absolute left-[324px] bottom-[3px] w-[432px] h-[7px] rounded-full bg-[#bbbbbb]" />
      </div>
    </div>
  );
}
